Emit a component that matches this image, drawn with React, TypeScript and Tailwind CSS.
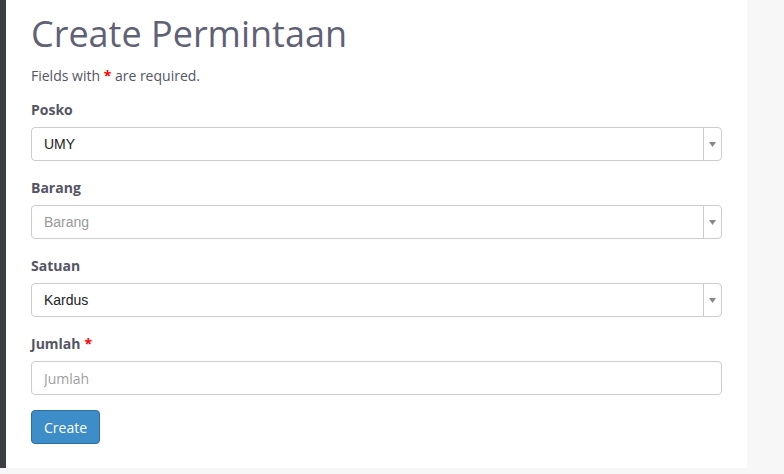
const sans = { fontFamily: '"Open Sans", "Liberation Sans", sans-serif' };

function Caret() {
  return (
    <span className="flex w-[18px] items-center justify-center border-l border-[#cccccc]">
      <svg width="7" height="5" viewBox="0 0 7 5">
        <path d="M0 0 L7 0 L3.5 5 Z" fill="#888888" />
      </svg>
    </span>
  );
}

function SelectBox({ value, placeholder }: { value?: string; placeholder?: string }) {
  return (
    <div className="flex h-[34px] w-full rounded-[4px] border border-[#cccccc] bg-white">
      <span
        className={`flex flex-1 items-center pl-[12px] text-[14px] ${value ? 'text-[#222222]' : 'text-[#999999]'}`}
        style={{ fontFamily: '"Liberation Sans", Arial, sans-serif' }}
      >
        {value ?? placeholder}
      </span>
      <Caret />
    </div>
  );
}

function Label({ text, required }: { text: string; required?: boolean }) {
  return (
    <label className="mb-[7px] block text-[14px] font-bold leading-[20px] text-[#555566]">
      {text}
      {required && <span className="ml-[4px] text-[#ff0000]">*</span>}
    </label>
  );
}

export default function App() {
  return (
    <div className="flex h-[474px] w-[784px] bg-[#f7f7f7]" style={sans}>
      <div className="h-[468px] w-[6px] bg-[#3d3e42]" />
      <div className="h-[468px] w-[741px] bg-white pl-[25px] pr-[25px] pt-[12px]">
        <h1 className="text-[36px] font-normal leading-[44px] text-[#5f6175]">Create Permintaan</h1>
        <p className="mt-[10px] text-[14px] leading-[20px] text-[#555566]">
          Fields with <span className="font-bold text-[#ff0000]">*</span> are required.
        </p>

        <div className="mt-[14px]">
          <Label text="Posko" />
          <SelectBox value="UMY" />
        </div>
        <div className="mt-[17px]">
          <Label text="Barang" />
          <SelectBox placeholder="Barang" />
        </div>
        <div className="mt-[17px]">
          <Label text="Satuan" />
          <SelectBox value="Kardus" />
        </div>
        <div className="mt-[17px]">
          <Label text="Jumlah" required />
          <input
            placeholder="Jumlah"
            className="h-[34px] w-full rounded-[4px] border border-[#cccccc] bg-white px-[12px] text-[14px] text-[#555555] outline-none placeholder:text-[#a0a0a0]"
          />
        </div>
        <button
          type="button"
          className="mt-[15px] h-[34px] rounded-[4px] border border-[#2e6da4] bg-[#3c8dc8] px-[12px] text-[14px] text-white"
        >
          Create
        </button>
      </div>
    </div>
  );
}
